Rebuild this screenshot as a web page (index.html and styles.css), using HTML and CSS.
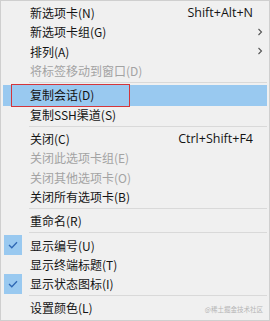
FILE: index.html
```html
<!DOCTYPE html>
<html lang="zh">
<head>
<meta charset="utf-8">
<link rel="stylesheet" href="styles.css">
</head>
<body>
<div class="menu">
  <div class="item"><span class="chk"></span><span class="label">新选项卡(N)</span><span class="key">Shift+Alt+N</span><span class="arr"></span></div>
  <div class="item"><span class="chk"></span><span class="label">新选项卡组(G)</span><span class="key"></span><span class="arr"><svg width="6" height="8" viewBox="0 0 6 8"><path d="M1.5 1 L4.5 4 L1.5 7" fill="none" stroke="#555" stroke-width="1.1"/></svg></span></div>
  <div class="item"><span class="chk"></span><span class="label">排列(A)</span><span class="key"></span><span class="arr"><svg width="6" height="8" viewBox="0 0 6 8"><path d="M1.5 1 L4.5 4 L1.5 7" fill="none" stroke="#555" stroke-width="1.1"/></svg></span></div>
  <div class="item disabled"><span class="chk"></span><span class="label">将标签移动到窗口(D)</span><span class="key"></span><span class="arr"></span></div>
  <div class="sep"></div>
  <div class="item hot"><span class="chk"></span><span class="label">复制会话(D)</span><span class="key"></span><span class="arr"></span><span class="mark"></span></div>
  <div class="item"><span class="chk"></span><span class="label">复制SSH渠道(S)</span><span class="key"></span><span class="arr"></span></div>
  <div class="sep"></div>
  <div class="item"><span class="chk"></span><span class="label">关闭(C)</span><span class="key">Ctrl+Shift+F4</span><span class="arr"></span></div>
  <div class="item disabled"><span class="chk"></span><span class="label">关闭此选项卡组(E)</span><span class="key"></span><span class="arr"></span></div>
  <div class="item disabled"><span class="chk"></span><span class="label">关闭其他选项卡(O)</span><span class="key"></span><span class="arr"></span></div>
  <div class="item"><span class="chk"></span><span class="label">关闭所有选项卡(B)</span><span class="key"></span><span class="arr"></span></div>
  <div class="sep"></div>
  <div class="item"><span class="chk"></span><span class="label">重命名(R)</span><span class="key"></span><span class="arr"></span></div>
  <div class="sep"></div>
  <div class="item"><span class="chk on"><svg width="10" height="8" viewBox="0 0 10 8"><path d="M1 4 L3.8 6.8 L9 1.2" fill="none" stroke="#2f68b4" stroke-width="1.3"/></svg></span><span class="label">显示编号(U)</span><span class="key"></span><span class="arr"></span></div>
  <div class="item"><span class="chk"></span><span class="label">显示终端标题(T)</span><span class="key"></span><span class="arr"></span></div>
  <div class="item"><span class="chk on"><svg width="10" height="8" viewBox="0 0 10 8"><path d="M1 4 L3.8 6.8 L9 1.2" fill="none" stroke="#2f68b4" stroke-width="1.3"/></svg></span><span class="label">显示状态图标(I)</span><span class="key"></span><span class="arr"></span></div>
  <div class="sep"></div>
  <div class="item"><span class="chk"></span><span class="label">设置颜色(L)</span><span class="key"></span><span class="arr"></span></div>
  <div class="wm">@稀土掘金技术社区</div>
</div>
</body>
</html>
```
FILE: styles.css
```css
html, body {
  margin: 0;
  padding: 0;
  background: #f0f0f0;
}
.menu {
  position: relative;
  box-sizing: border-box;
  width: 270px;
  height: 321px;
  background: #f0f0f0;
  border: 1px solid #cfcfcf;
  padding: 2px 2px 2px 2px;
  font-family: "Noto Sans CJK SC", "Noto Sans", sans-serif;
  font-size: 12px;
  color: #141414;
}
.item {
  position: relative;
  height: 19.3px;
  display: grid;
  grid-template-columns: 26px 1fr auto 14px;
  align-items: center;
}
.item > span { position: relative; z-index: 1; }
.label { padding-left: 1px; white-space: nowrap; }
.key {
  font-family: "Open Sans", "Noto Sans", sans-serif;
  font-size: 12.5px;
}
.arr { display: flex; justify-content: center; align-items: center; }
.disabled { color: #a3a3a3; }
.sep {
  height: 5px;
  display: flex;
  align-items: center;
  padding-left: 26px;
}
.sep::before {
  content: "";
  flex: 1;
  height: 1px;
  background: #d9d9d9;
}
.hot::before {
  content: "";
  position: absolute;
  left: 0;
  right: 0;
  top: 0;
  bottom: -2px;
  background: #99c9f0;
}
.mark {
  position: absolute !important;
  left: 8px;
  width: 119px;
  top: -1px;
  bottom: -3px;
  border: 1px solid #d4363b;
  box-sizing: border-box;
}
.chk {
  height: 100%;
  display: flex;
  align-items: center;
  justify-content: center;
}
.chk.on {
  margin-left: 1px;
  width: 18px;
  height: 20px;
  background: #99c9f0;
}
.wm {
  position: absolute;
  right: 6px;
  bottom: 6px;
  font-size: 6.5px;
  color: #b5b5b5;
}
```
